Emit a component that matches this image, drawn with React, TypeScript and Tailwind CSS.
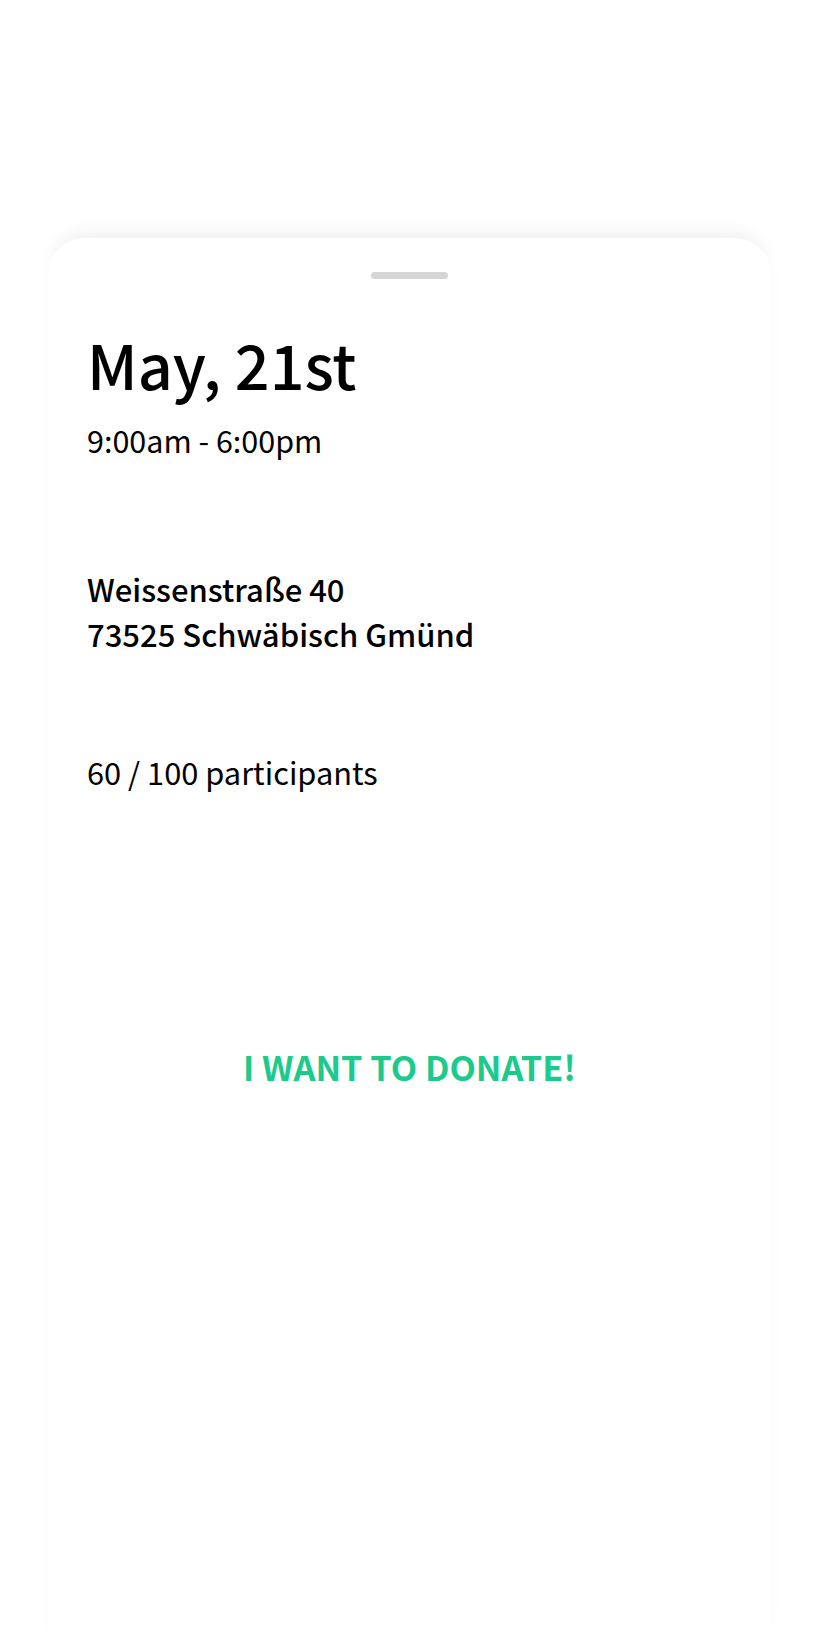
const font = { fontFamily: '"Noto Sans CJK JP", "Noto Sans", sans-serif' };

export default function App() {
  return (
    <div className="min-h-[1648px] bg-white pt-[238px] pl-[48px] pr-[43px]" style={font}>
      <div className="min-h-[1410px] rounded-t-[36px] bg-white shadow-[0_-12px_20px_-10px_rgba(0,0,0,0.09)]">
        <div className="flex justify-center pt-[34px]">
          <div className="h-[7px] w-[77px] rounded-full bg-[#d6d6d6]" />
        </div>

        <div className="px-[39px] pt-[48px] text-black">
          <h1 className="text-[61px] leading-[74px] font-medium">May, 21st</h1>
          <p className="mt-[17px] text-[30.5px] leading-[44px]">9:00am - 6:00pm</p>

          <div className="mt-[104px] text-[31px] leading-[45px] font-medium">
            <p>Weissenstraße 40</p>
            <p>73525 Schwäbisch Gmünd</p>
          </div>

          <p className="mt-[94px] text-[30.8px] leading-[44px]">60 / 100 participants</p>
        </div>

        <div className="mt-[250px] flex justify-center">
          <button className="text-[34.3px] leading-[44px] font-bold text-[#1ccb8c]">I WANT TO DONATE!</button>
        </div>
      </div>
    </div>
  );
}
